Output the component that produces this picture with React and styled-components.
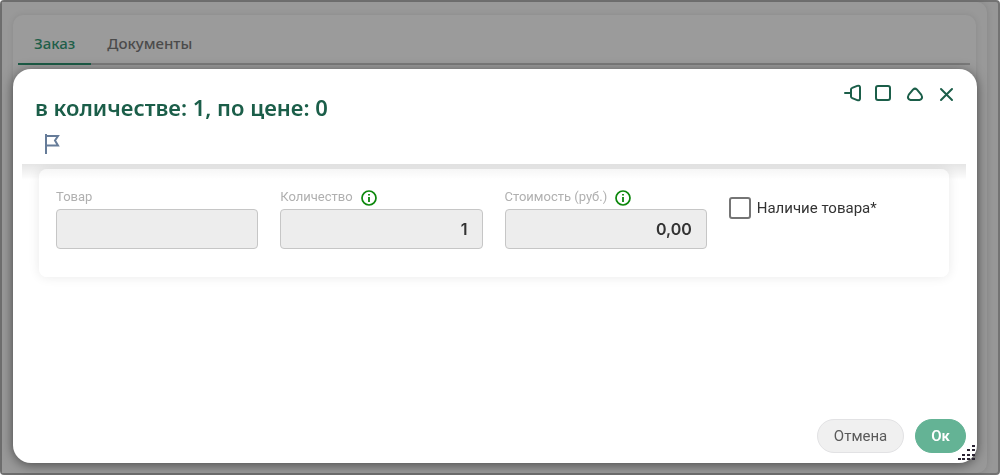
import React, { useState } from "react";
import styled, { createGlobalStyle } from "styled-components";

const GlobalStyle = createGlobalStyle`
  * {
    box-sizing: border-box;
  }
  body {
    margin: 0;
    background: #fff;
    font-family: "Noto Sans", "Liberation Sans", sans-serif;
    color: #333;
  }
  button,
  input {
    font-family: inherit;
  }
`;

const Page = styled.main`
  min-height: 100vh;
  display: flex;
  padding: 0 11px 0 0;
  background: #979797;
  border: 2px solid #737373;
  border-radius: 4px;
`;

const PageInner = styled.div`
  flex: 1;
  padding: 13px 11px 0;
  border-radius: 0 10px 10px 0;
  background: #999;
  box-shadow: 0 0 6px rgba(0, 0, 0, 0.12);
`;

const OrderPanel = styled.section`
  min-height: 440px;
  padding: 8px 6px 0 5px;
  border-radius: 10px;
  background: #9b9b9b;
  box-shadow: 0 0 6px rgba(0, 0, 0, 0.1);
`;

const TabList = styled.nav`
  display: flex;
  height: 42px;
  border-bottom: 2px solid #7b7b7b;
`;

const Tab = styled.button`
  height: 42px;
  padding: 0 16px;
  border: 0;
  border-bottom: 2px solid ${({ $active }) => ($active ? "#1c5b46" : "transparent")};
  background: none;
  font-size: 15px;
  font-weight: 500;
  color: ${({ $active }) => ($active ? "#1f5f49" : "#4b4b4b")};
`;

const Modal = styled.div`
  position: fixed;
  inset: 69px 23px 12px 13px;
  display: flex;
  flex-direction: column;
  padding: 0 11px 10px 9px;
  border-radius: 18px;
  background: #fff;
  box-shadow: 0 2px 12px rgba(0, 0, 0, 0.5);
`;

const ModalHeader = styled.header`
  display: flex;
  justify-content: space-between;
  height: 95px;
  padding: 23px 9px 0 13px;
`;

const Title = styled.h1`
  margin: 0;
  font-size: 22px;
  line-height: 30px;
  font-weight: 600;
  color: #1b5e49;
`;

const FlagButton = styled.button`
  display: block;
  margin: 11px 0 0 8px;
  padding: 0;
  border: 0;
  background: none;
  svg {
    display: block;
  }
`;

const WindowButtons = styled.div`
  display: flex;
  align-items: flex-start;
  gap: 12px;
  margin-top: -8px;
`;

const IconButton = styled.button`
  display: block;
  padding: 0;
  border: 0;
  background: none;
  color: #1b5e49;
  svg {
    display: block;
    fill: none;
    stroke: currentColor;
    stroke-width: 2;
    stroke-linecap: round;
    stroke-linejoin: round;
  }
`;

const ModalBody = styled.div`
  flex: 1;
  padding: 5px 17px 0;
  overflow: hidden;
  background: linear-gradient(rgba(0, 0, 0, 0.1), rgba(0, 0, 0, 0) 16px);
`;

const Card = styled.div`
  display: grid;
  grid-template-columns: repeat(4, 1fr);
  gap: 22px;
  padding: 17px 18px 28px 17px;
  border-radius: 8px;
  background: linear-gradient(#f6f6f6, #fff 10px);
  box-shadow: 0 0 12px rgba(0, 0, 0, 0.09);
`;

const LabelRow = styled.div`
  display: flex;
  align-items: center;
  gap: 8px;
  height: 23px;
  font-family: Roboto, "Liberation Sans", sans-serif;
  font-size: 13px;
  line-height: 16px;
  color: #b0b0b0;
  svg {
    display: block;
  }
  label {
    margin-bottom: 2px;
  }
`;

const Input = styled.input`
  display: block;
  width: 100%;
  height: 40px;
  padding: 0 14px;
  border: 1px solid #c6c6c6;
  border-radius: 4px;
  background: #ededed;
  font-family: Inter, "Liberation Sans", sans-serif;
  font-size: 16px;
  font-weight: 600;
  text-align: right;
  color: #333;
  outline: none;
`;

const CheckLabel = styled.label`
  display: flex;
  align-items: center;
  align-self: start;
  gap: 6px;
  margin-top: 11px;
  font-family: Roboto, "Liberation Sans", sans-serif;
  font-size: 15px;
  line-height: 22px;
  white-space: nowrap;
`;

const Checkbox = styled.input`
  appearance: none;
  width: 22px;
  height: 22px;
  margin: 0;
  border: 2px solid #757575;
  border-radius: 3px;
  background: #fff;
  &:checked {
    background: #64b395;
  }
`;

const ModalFooter = styled.footer`
  display: flex;
  justify-content: flex-end;
  gap: 11px;
`;

const Button = styled.button`
  height: 34px;
  padding: 0 ${({ $primary }) => ($primary ? 15 : 16)}px;
  border: 1px solid ${({ $primary }) => ($primary ? "#64b395" : "#e2e2e4")};
  border-radius: 17px;
  background: ${({ $primary }) => ($primary ? "#64b395" : "#f0f0f0")};
  font-family: Roboto, "Liberation Sans", sans-serif;
  font-size: 15px;
  font-weight: ${({ $primary }) => ($primary ? 600 : 400)};
  color: ${({ $primary }) => ($primary ? "#fff" : "#5a5a5a")};
`;

const ResizeGrip = styled.svg`
  position: absolute;
  right: 1px;
  bottom: 2px;
`;

const InfoIcon = () => (
  <svg width="16" height="16" viewBox="0 0 16 16" fill="none" stroke="#0b870b">
    <circle cx="8" cy="8" r="7" strokeWidth="1.7" />
    <path d="M8 7v5M8 3.9v1.6" strokeWidth="1.8" />
  </svg>
);

const GRIP_DOTS = [
  [14, 0],
  [9, 4], [14, 4],
  [4, 9], [9, 9], [14, 9],
  [0, 13], [4, 13], [9, 13], [14, 13],
];

const Field = ({ id, label, value, info }) => (
  <div>
    <LabelRow>
      <label htmlFor={id}>{label}</label>
      {info && <InfoIcon />}
    </LabelRow>
    <Input id={id} type="text" value={value} readOnly />
  </div>
);

const App = () => {
  const [inStock, setInStock] = useState(false);

  return (
    <>
      <GlobalStyle />
      <Page>
        <PageInner>
          <OrderPanel>
            <TabList>
              <Tab type="button" $active>
                Заказ
              </Tab>
              <Tab type="button">Документы</Tab>
            </TabList>
          </OrderPanel>
        </PageInner>
      </Page>

      <Modal role="dialog" aria-labelledby="modal-title">
        <ModalHeader>
          <div>
            <Title id="modal-title">в количестве: 1, по цене: 0</Title>
            <FlagButton type="button" aria-label="Флаг">
              <svg width="18" height="22" viewBox="0 0 18 22" fill="none" stroke="#667c99" strokeWidth="2">
                <path d="M3 1v20M3 3h12l-3 4.500 3 5H3" />
              </svg>
            </FlagButton>
          </div>
          <WindowButtons>
            <IconButton type="button" aria-label="Закрепить">
              <svg width="22" height="20" viewBox="-2 0 22 20">
                <path d="M4 9h6M10 5.500q0-1.200 1.200-1.600l5-2q2.800-.7 2.800 1.600v11q0 2.300-2.800 1.600l-5-2Q10 13.700 10 12.500z" />
              </svg>
            </IconButton>
            <IconButton type="button" aria-label="Развернуть">
              <svg width="20" height="20" viewBox="0 0 20 20">
                <rect x="3" y="2" width="14" height="14" rx="2" />
              </svg>
            </IconButton>
            <IconButton type="button" aria-label="Свернуть">
              <svg width="20" height="20" viewBox="0 0 20 20">
                <path d="M8.200 5.400q1.800-1.500 3.600 0l4.400 5.200q2.300 4.400-1.700 5.400h-9q-4-1-1.700-5.400z" />
              </svg>
            </IconButton>
            <IconButton type="button" aria-label="Закрыть">
              <svg width="20" height="20" viewBox="0 0 20 20">
                <path d="M4 5l11 11M15 5L4 16" />
              </svg>
            </IconButton>
          </WindowButtons>
        </ModalHeader>

        <ModalBody>
          <Card>
            <Field id="product" label="Товар" value="" />
            <Field id="quantity" label="Количество" value="1" info />
            <Field id="cost" label="Стоимость (руб.)" value="0,00" info />
            <CheckLabel>
              <Checkbox
                type="checkbox"
                checked={inStock}
                onChange={(e) => setInStock(e.target.checked)}
              />
              <span>Наличие товара*</span>
            </CheckLabel>
          </Card>
        </ModalBody>

        <ModalFooter>
          <Button type="button">Отмена</Button>
          <Button type="button" $primary>
            Ок
          </Button>
        </ModalFooter>

        <ResizeGrip width="18" height="16" viewBox="0 0 18 16" fill="#2b2433" aria-hidden="true">
          {GRIP_DOTS.map(([x, y]) => (
            <rect key={`${x}-${y}`} x={x} y={y} width="3" height="2" />
          ))}
        </ResizeGrip>
      </Modal>
    </>
  );
};

export default App;
